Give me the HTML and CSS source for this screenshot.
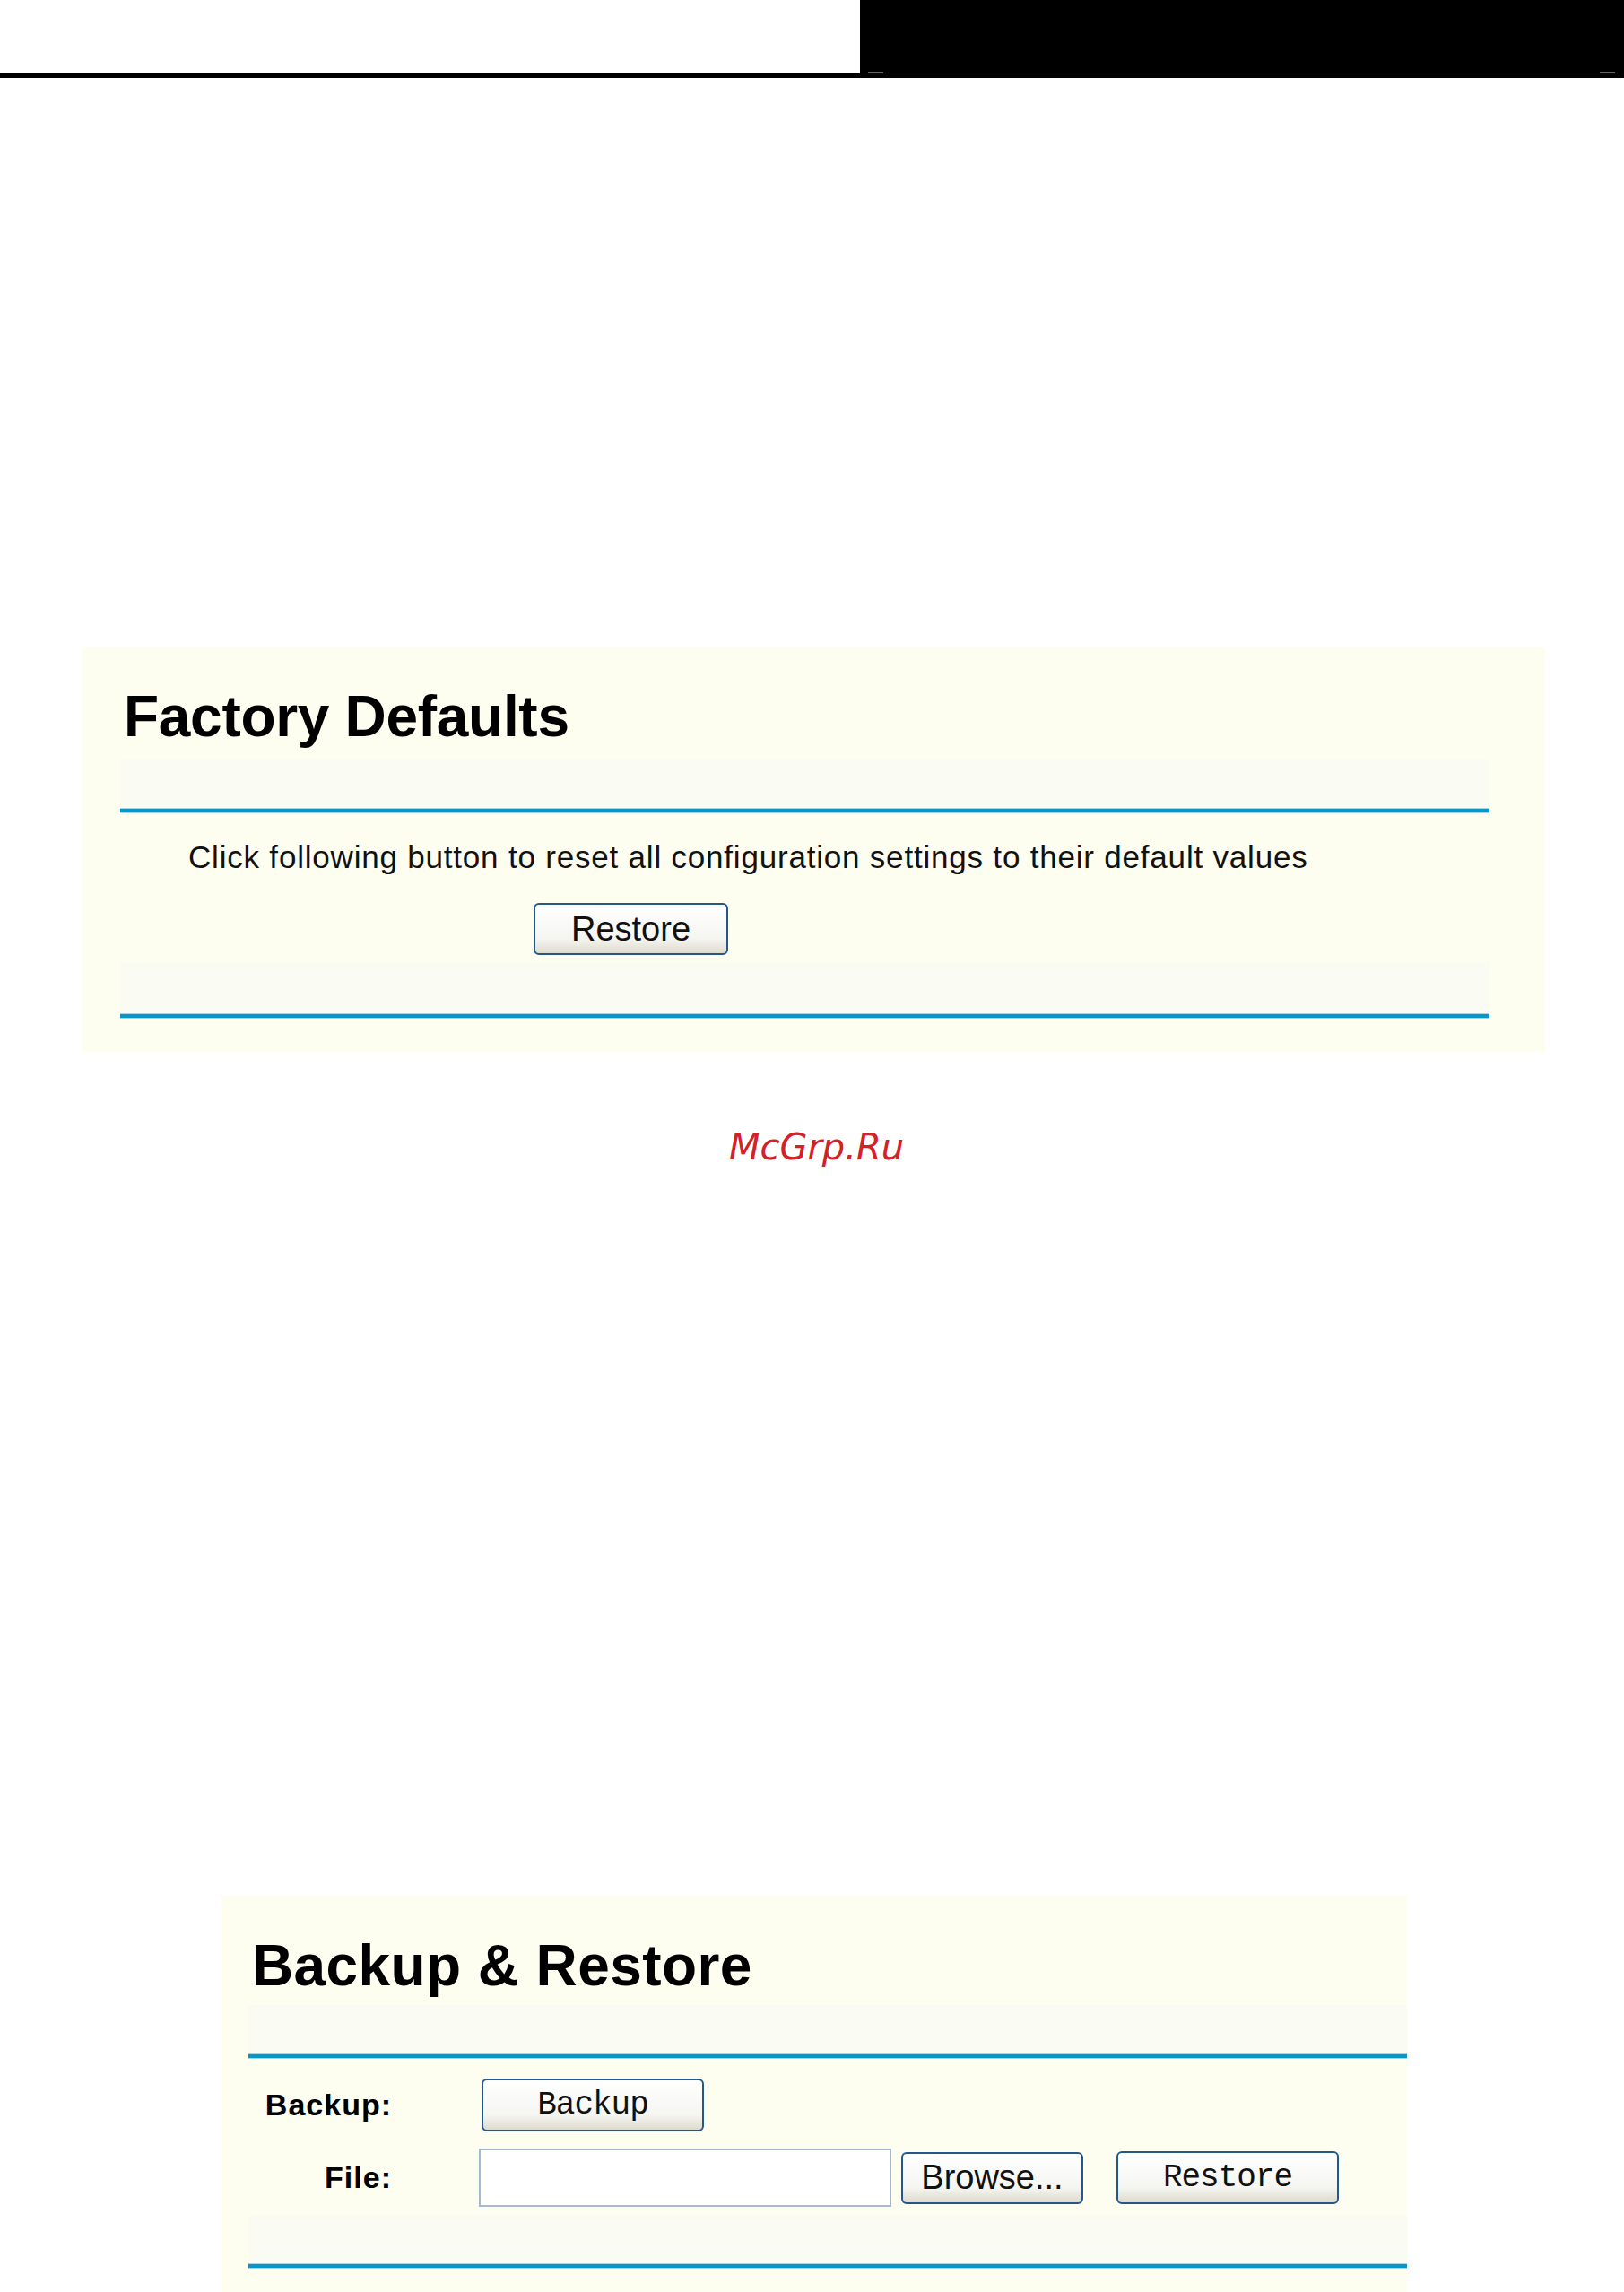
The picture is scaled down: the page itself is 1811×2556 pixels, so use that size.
FILE: index.html
```html
<!DOCTYPE html>
<html lang="en">
<head>
  <meta charset="UTF-8" />
  <title>Factory Defaults / Backup &amp; Restore</title>
  <link rel="stylesheet" href="styles.css">
</head>
<body>

  <div class="page-top">
    <div class="page-top-blank"></div>
    <div class="page-top-fill">
      <span class="tick"></span>
      <span class="tick"></span>
    </div>
  </div>

  <section class="panel panel-factory">
    <h1 class="panel-title">Factory Defaults</h1>
    <div class="band"></div>
    <div class="rule"></div>
    <p class="panel-note">Click following button to reset all configuration settings to their default values</p>
    <button class="btn btn-sans btn-factory">Restore</button>
    <div class="band band-low"></div>
    <div class="rule"></div>
  </section>

  <div class="watermark">McGrp.Ru</div>

  <section class="panel panel-backup">
    <h1 class="panel-title">Backup &amp; Restore</h1>
    <div class="band"></div>
    <div class="rule"></div>
    <div class="form-row form-row-first">
      <label>Backup:</label>
      <button class="btn btn-mono btn-backup">Backup</button>
    </div>
    <div class="form-row">
      <label>File:</label>
      <input class="file-path" type="text">
      <button class="btn btn-sans btn-browse">Browse...</button>
      <button class="btn btn-mono btn-restore">Restore</button>
    </div>
    <div class="band band-end"></div>
    <div class="rule"></div>
  </section>

</body>
</html>
```

FILE: styles.css
```css
body {
  margin: 0;
  background: #fff;
  font-family: "Liberation Sans", Arial, sans-serif;
  color: #000;
}

/* black page header */
.page-top {
  display: flex;
  height: 81px;
  border-bottom: 6px solid #000;
}

.page-top-blank {
  width: 959px;
}

.page-top-fill {
  flex: 1;
  background: #000;
  display: flex;
  justify-content: space-between;
  align-items: flex-end;
  padding: 0 10px 0 9px;
}

.tick {
  width: 17px;
  height: 1px;
  background: #666;
}

/* cream config panels */
.panel {
  background: #fdfdf0;
  box-sizing: border-box;
}

.panel-title {
  margin: 0;
  padding-left: 4px;
  font-size: 64px;
  line-height: 64px;
  letter-spacing: -0.3px;
  font-weight: bold;
}

.band {
  height: 54px;
  background: #fafbf3;
}

.rule {
  height: 6px;
  background: linear-gradient(#a6d6e8 0 1px, #0896c8 1px 5px, #a6d6e8 5px);
}

.panel-factory {
  width: 1632px;
  margin: 635px 0 0 91px;
  padding: 45px 62px 37px 43px;
}

.panel-factory .panel-title {
  margin-bottom: 16px;
}

.panel-note {
  margin: 29px 0 31px;
  padding-left: 76px;
  font-size: 35px;
  line-height: 40px;
  letter-spacing: 0.8px;
  color: #111;
}

.panel-factory .band-low {
  height: 57px;
  margin-top: 8px;
}

.panel-backup {
  width: 1322px;
  margin: 811px 0 0 247px;
  padding: 46px 0 26px 30px;
}

.panel-backup .panel-title {
  margin-bottom: 12px;
  letter-spacing: 0.4px;
}

.form-row {
  display: flex;
  align-items: center;
  margin-top: 19px;
}

.form-row-first {
  margin-top: 22px;
}

.form-row label {
  width: 160px;
  margin-right: 97px;
  text-align: right;
  font-size: 34px;
  font-weight: bold;
  letter-spacing: 1px;
}

.band-end {
  margin-top: 9px;
}

/* xp-style buttons */
.btn {
  box-sizing: border-box;
  padding: 0;
  border: 2px solid #24588a;
  border-radius: 6px;
  background: linear-gradient(#ffffff, #f5f5f1 70%, #dedbcd);
  color: #111;
}

.btn-sans {
  font-family: "Liberation Sans", Arial, sans-serif;
  font-size: 38px;
}

.btn-mono {
  font-family: "Liberation Mono", "Courier New", monospace;
  font-size: 36px;
  letter-spacing: -1px;
}

.btn-factory {
  display: block;
  width: 217px;
  height: 58px;
  margin-left: 461px;
}

.btn-backup {
  width: 248px;
  height: 59px;
  margin-left: 3px;
}

.file-path {
  box-sizing: border-box;
  width: 460px;
  height: 65px;
  margin: 0;
  padding: 0;
  border: 2px solid #a5b9cf;
  background: #fff;
}

.btn-browse {
  width: 203px;
  height: 58px;
  margin-left: 11px;
}

.btn-restore {
  width: 248px;
  height: 59px;
  margin-left: 37px;
}

.watermark {
  margin-top: 82px;
  padding-left: 10px;
  text-align: center;
  font-family: "DejaVu Sans", sans-serif;
  font-style: oblique;
  font-size: 40px;
  line-height: 48px;
  color: #d32127;
}
```
